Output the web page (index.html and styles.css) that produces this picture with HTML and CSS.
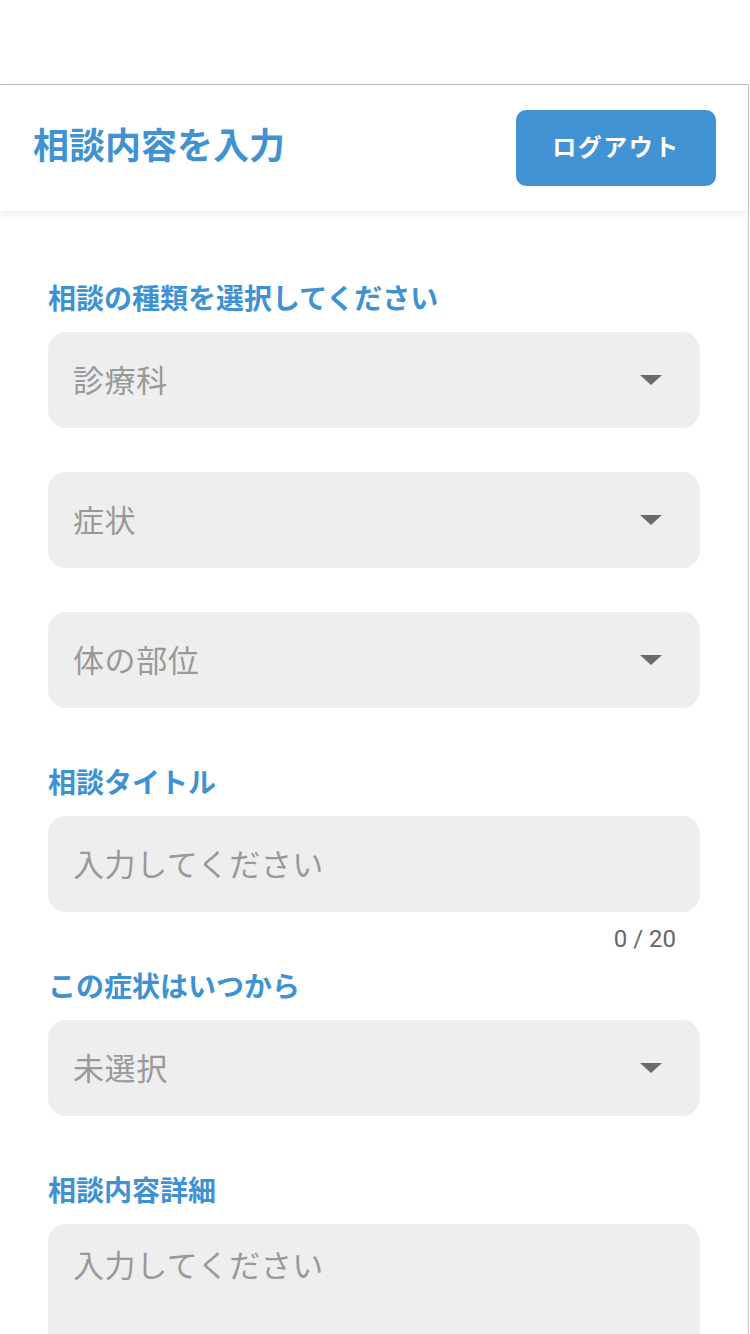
FILE: index.html
```html
<!DOCTYPE html>
<html lang="ja">
<head>
<meta charset="utf-8">
<title>相談内容を入力</title>
<link rel="stylesheet" href="styles.css">
</head>
<body>
<div class="frame">
  <header class="header">
    <h1 class="title">相談内容を入力</h1>
    <button class="logout">ログアウト</button>
  </header>
  <main class="form">
    <div class="label">相談の種類を選択してください</div>
    <div class="select"><span class="ph">診療科</span><span class="caret"></span></div>
    <div class="select gap"><span class="ph">症状</span><span class="caret"></span></div>
    <div class="select gap"><span class="ph">体の部位</span><span class="caret"></span></div>

    <div class="label section">相談タイトル</div>
    <div class="select"><span class="ph">入力してください</span></div>
    <div class="counter">0 / 20</div>

    <div class="label after-counter">この症状はいつから</div>
    <div class="select"><span class="ph">未選択</span><span class="caret"></span></div>

    <div class="label section">相談内容詳細</div>
    <div class="textarea"><span class="ph">入力してください</span></div>
  </main>
</div>
</body>
</html>
```
FILE: styles.css
```css
html, body {
  margin: 0;
  padding: 0;
  background: #ffffff;
}
body {
  font-family: "Noto Sans CJK JP", "Noto Sans", sans-serif;
  overflow: hidden;
  height: 1334px;
}
.frame {
  margin-top: 84px;
  width: 748px;
  border-top: 1px solid #bdbdbd;
  border-right: 1px solid #c8c8c8;
  min-height: 1300px;
}
.header {
  height: 126px;
  display: flex;
  align-items: center;
  justify-content: space-between;
  padding: 0 32px 0 33px;
  background: #fff;
  box-shadow: 0 3px 8px rgba(0, 0, 0, 0.08);
  position: relative;
}
.title {
  margin: 0 0 10px 0;
  font-size: 36px;
  font-weight: 700;
  color: #4192d3;
  line-height: 1;
}
.logout {
  width: 200px;
  height: 76px;
  border: none;
  border-radius: 10px;
  background: #4293d3;
  color: #fff;
  font-family: inherit;
  font-size: 24px;
  font-weight: 700;
  letter-spacing: 1.5px;
  padding: 0 0 5px 0;
}
.form {
  padding: 69px 48px 0 48px;
  display: flex;
  flex-direction: column;
}
.label {
  font-size: 28px;
  line-height: 34px;
  font-weight: 700;
  color: #3e91d2;
  margin-bottom: 18px;
}
.label.section { margin-top: 56px; }
.label.after-counter { margin-top: 16px; }
.select {
  height: 96px;
  background: #eeeeee;
  border-radius: 18px;
  display: flex;
  align-items: center;
  justify-content: space-between;
  padding: 0 38px 4px 25px;
  box-sizing: border-box;
}
.select.gap { margin-top: 44px; }
.caret { margin-top: 4px; }
.ph {
  font-size: 31px;
  color: #999999;
  letter-spacing: 0.6px;
}
.caret {
  width: 0;
  height: 0;
  border-left: 11px solid transparent;
  border-right: 11px solid transparent;
  border-top: 10px solid #6a6a6a;
}
.counter {
  align-self: flex-end;
  margin-top: 14px;
  margin-right: 24px;
  font-family: Roboto, "Noto Sans", sans-serif;
  font-size: 24px;
  line-height: 26px;
  color: #666;
}
.textarea {
  height: 200px;
  background: #eeeeee;
  border-radius: 18px 18px 0 0;
  padding: 17px 25px;
  box-sizing: border-box;
}
```
